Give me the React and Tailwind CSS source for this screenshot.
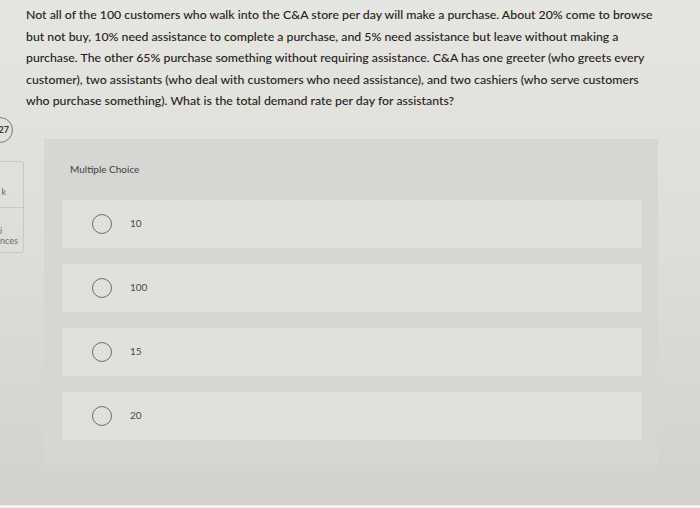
import React from "react";

const options = ["10", "100", "15", "20"];

const Radio = () => (
  <span className="block w-[20px] h-[20px] rounded-full border-[1.5px] border-[#5f6d70] shrink-0" />
);

export default function App() {
  return (
    <div
      className="w-[700px] h-[508px] flex flex-col overflow-hidden bg-gradient-to-b from-[#e7e5e0] via-[#dfddd8] to-[#d3d1cb] text-[#222]"
      style={{ fontFamily: "Lato, 'Liberation Sans', sans-serif" }}
    >
      {/* Question */}
      <div className="pl-[26px] pt-[4px] text-[12.3px] leading-[21.5px] whitespace-nowrap font-medium">
        Not all of the 100 customers who walk into the C&amp;A store per day will make a purchase. About 20% come to browse
        <br />
        but not buy, 10% need assistance to complete a purchase, and 5% need assistance but leave without making a
        <br />
        purchase. The other 65% purchase something without requiring assistance. C&amp;A has one greeter (who greets every
        <br />
        customer), two assistants (who deal with customers who need assistance), and two cashiers (who serve customers
        <br />
        who purchase something). What is the total demand rate per day for assistants?
      </div>

      <div className="flex mt-[27px]">
        {/* Sidebar stub */}
        <div className="w-[26px] -mt-[22px] shrink-0 overflow-hidden">
          <div className="-ml-[13px] w-[26px] h-[26px] rounded-full border-[1.5px] border-[#7a7a78] flex items-center justify-end pr-[3px] text-[9px] font-bold text-[#333]">
            27
          </div>
          <div className="-ml-[12px] mt-[18px] w-[36px] h-[92px] rounded-[3px] border border-[#c9c7c1] flex flex-col text-[9px] text-[#6a6a68]">
            <div className="h-[46px] border-b border-[#c9c7c1] flex items-end justify-end pr-[17px] pb-[8px]">k</div>
            <div className="flex-1 flex flex-col justify-end pl-[11px] pb-[6px] leading-[10px]">
              <span>i</span>
              <span>nces</span>
            </div>
          </div>
        </div>

        {/* Question panel */}
        <div className="ml-[18px] w-[614px] h-[326px] bg-[#d7d6d2] pt-[23px] pl-[18px] pr-[16px]">
          <div className="pl-[8px] text-[10px] text-[#3f3f3f]">Multiple Choice</div>
          <div className="mt-[23px] flex flex-col gap-[16px]">
            {options.map((o) => (
              <div key={o} className="h-[48px] bg-[#e1e0dc] flex items-center pl-[30px] gap-[18px]">
                <Radio />
                <span className="text-[10px] text-[#4a4a4a]">{o}</span>
              </div>
            ))}
          </div>
        </div>
      </div>

      <div className="mt-auto h-[3px] bg-[#f2f2f0]" />
    </div>
  );
}
